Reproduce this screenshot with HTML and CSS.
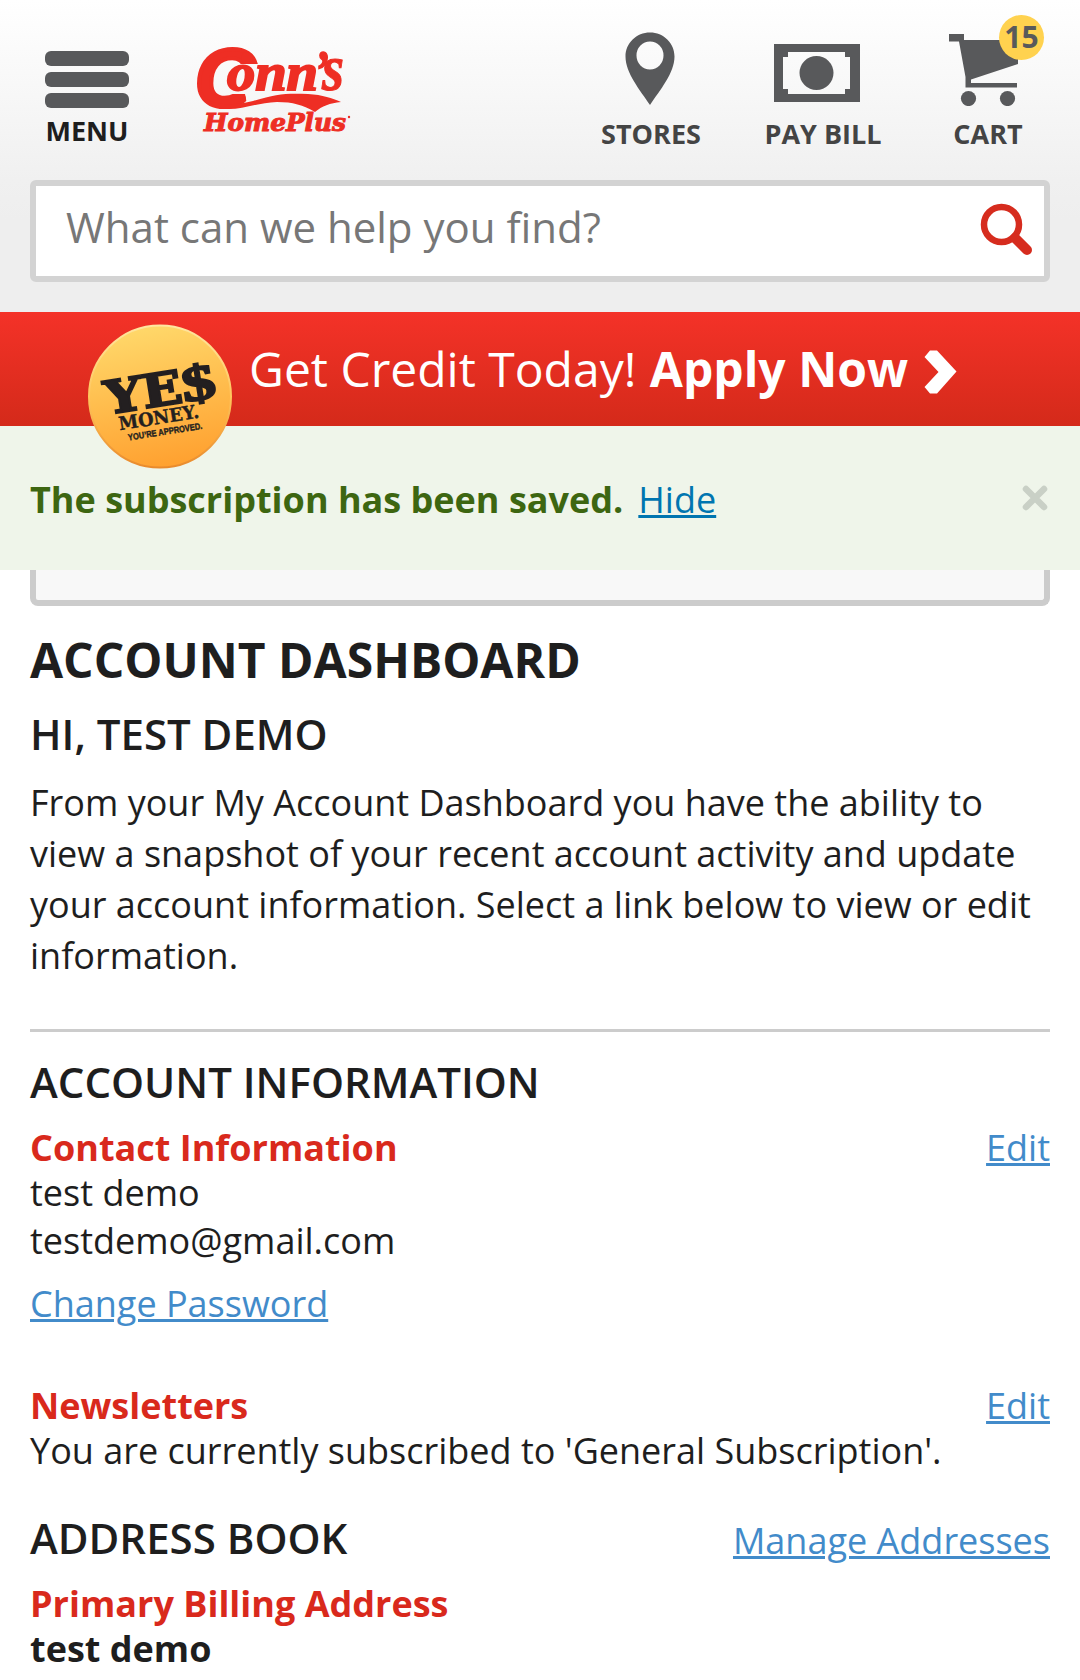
FILE: index.html
```html
<!DOCTYPE html>
<html lang="en">
<head>
<meta charset="utf-8">
<title>Account Dashboard</title>
<link rel="stylesheet" href="styles.css">
</head>
<body>
<header class="header">
  <div class="topbar">
    <a class="menu">
      <span class="bar"></span><span class="bar"></span><span class="bar"></span>
      <span class="menu-label">MENU</span>
    </a>
    <svg class="logo" viewBox="0 0 160 90" width="160" height="90">
      <clipPath id="c-clip"><path d="M-5-5H70V20H26V50H50L54 70H-5Z"/></clipPath>
      <g fill="#ee2e24" stroke="#ee2e24" font-weight="bold">
        <g clip-path="url(#c-clip)"><text x="0" y="62" font-family="Liberation Sans, sans-serif" font-size="81" font-style="italic" textLength="60" lengthAdjust="spacingAndGlyphs" stroke-width="4">C</text></g>
        <circle cx="52" cy="14" r="6" stroke="none"/>
        <g font-family="Liberation Serif, serif" font-style="italic">
          <text x="32" y="46" font-size="53" textLength="91" lengthAdjust="spacingAndGlyphs" stroke-width="2">onn</text>
          <text x="119" y="44" font-size="54" textLength="15" lengthAdjust="spacingAndGlyphs" stroke-width="1.500">’</text>
          <text x="127" y="46" font-size="66" textLength="22" lengthAdjust="spacingAndGlyphs" stroke-width="1">s</text>
        </g>
        <path stroke="none" d="M14 56C24 62 43 61 58 57C81 50 91 49 113 50C128 51 137 54 146 58C135 59 127 62 120 68C108 61 98 58 82 58C61 59 46 66 31 65C23 65 17 62 14 56Z"/>
        <text x="9" y="86.500" font-family="DejaVu Serif, serif" font-style="italic" font-size="24" textLength="142" lengthAdjust="spacingAndGlyphs" stroke-width="1">HomePlus</text>
      </g>
      <circle cx="154" cy="73" r="1.200" fill="#ee2e24"/>
    </svg>
    <nav class="tools">
      <a class="tool stores">
        <svg width="50" height="74" viewBox="0 0 50 74"><path fill="#58595b" fill-rule="evenodd" d="M25 .500C11.500.500.500 11 .500 24.500C.500 41 15 58 25 73C35 58 49.500 41 49.500 24.500C49.500 11 38.500.500 25 .500ZM25 9.500A13.500 14 0 1 1 25 37.500A13.500 14 0 1 1 25 9.500Z"/></svg>
        <span>STORES</span>
      </a>
      <a class="tool bill">
        <svg width="86" height="58" viewBox="0 0 86 58"><path fill="#58595b" fill-rule="evenodd" d="M0 0H86V58H0ZM14 8V13H9V45H14V50H71V45H76V13H71V8Z"/><circle cx="42.500" cy="29" r="17" fill="#58595b"/></svg>
        <span>PAY BILL</span>
      </a>
      <a class="tool cart">
        <svg width="70" height="74" viewBox="0 0 70 74"><path fill="#58595b" d="M0 2H15V8H69V32L22 47.500V51H68V55.500H16.500V45L10 9.500H0Z"/><circle cx="19.500" cy="66.500" r="7.600" fill="#58595b"/><circle cx="58.500" cy="66.500" r="7.600" fill="#58595b"/></svg>
        <span>CART</span>
        <b class="badge">15</b>
      </a>
    </nav>
  </div>
  <div class="search">
    <span>What can we help you find?</span>
    <svg width="54" height="54" viewBox="0 0 54 54"><circle cx="21.500" cy="21.500" r="17.500" fill="none" stroke="#d62c1e" stroke-width="6.500"/><path d="M35 35L47 47" stroke="#d62c1e" stroke-width="10" stroke-linecap="round"/></svg>
  </div>
</header>
<div class="banner">
  <svg class="coin" width="144" height="146" viewBox="0 0 144 146">
    <defs>
      <linearGradient id="gold" x1="0.400" y1="0" x2="0.600" y2="1"><stop offset="0" stop-color="#ffd86a"/><stop offset="1" stop-color="#ffa02f"/></linearGradient>
      <linearGradient id="rim" x1="0" y1="0" x2="0" y2="1"><stop offset="0" stop-color="#ffe6a0"/><stop offset="0.500" stop-color="#ffc65c"/><stop offset="1" stop-color="#e98a2c"/></linearGradient>
    </defs>
    <circle cx="72" cy="72.500" r="71" fill="url(#gold)" stroke="url(#rim)" stroke-width="2"/>
    <g fill="#231f20" stroke="#231f20" font-weight="bold" transform="rotate(-9 72 72)">
      <text x="17" y="82" font-family="DejaVu Serif, serif" font-size="46" textLength="78" lengthAdjust="spacingAndGlyphs" stroke-width="2">YE</text>
      <text x="95" y="82" font-family="Liberation Serif, serif" font-size="50" textLength="34" lengthAdjust="spacingAndGlyphs" stroke-width="2">$</text>
      <text x="27" y="99.500" font-family="DejaVu Serif, serif" font-size="18.500" textLength="81" lengthAdjust="spacingAndGlyphs" stroke-width=".4">MONEY.</text>
      <text x="34" y="111" font-family="Liberation Sans, sans-serif" font-size="9" textLength="75" lengthAdjust="spacingAndGlyphs" stroke-width=".4">YOU’RE APPROVED.</text>
    </g>
  </svg>
  <span class="offer">Get Credit Today! <b>Apply Now</b></span>
  <svg class="chevron" width="33" height="44" viewBox="0 0 33 44"><path fill="#fff" d="M6 .500H13L32.500 21.500L13 43.500H6L.500 37L14.500 22L.500 7Z"/></svg>
</div>
<div class="notice">
  <b>The subscription has been saved.</b>
  <a class="hide">Hide</a>
  <svg class="close" width="26" height="26" viewBox="0 0 26 26"><path d="M4 4L22 22M22 4L4 22" stroke="#c9d0c6" stroke-width="6.500" stroke-linecap="round"/></svg>
</div>
<main class="main">
  <div class="panel"></div>
  <h1>ACCOUNT DASHBOARD</h1>
  <h2 class="hello">HI, TEST DEMO</h2>
  <p class="intro">From your My Account Dashboard you have the ability to view a snapshot of your recent account activity and update your account information. Select a link below to view or edit information.</p>
  <h2 class="section">ACCOUNT INFORMATION</h2>
  <div class="row"><h3>Contact Information</h3><a>Edit</a></div>
  <p>test demo<br>testdemo@gmail.com</p>
  <p class="password"><a>Change Password</a></p>
  <div class="row newsletters"><h3>Newsletters</h3><a>Edit</a></div>
  <p>You are currently subscribed to 'General Subscription'.</p>
  <div class="row address"><h2>ADDRESS BOOK</h2><a>Manage Addresses</a></div>
  <div class="row billing"><h3>Primary Billing Address</h3></div>
  <p><b>test demo</b></p>
</main>
</body>
</html>
```
FILE: styles.css
```css
* { box-sizing: border-box; }
body {
  margin: 0;
  height: 1680px;
  overflow: hidden;
  background: #fff;
  color: #1e1e1e;
  font: 36px/48px "Open Sans", sans-serif;
}
h1, h2, h3, p { margin: 0; }
.header {
  height: 312px;
  padding: 0 30px;
  background: linear-gradient(#fff 0, #f0f0f0 180px, #eee 220px);
}
.topbar { height: 180px; display: flex; align-items: flex-start; }
.menu {
  width: 84px;
  margin: 51px 0 0 15px;
  display: flex;
  flex-direction: column;
  gap: 6px;
}
.bar { height: 15px; border-radius: 6px; background: #58595b; }
.menu-label {
  margin-top: -1px;
  text-align: center;
  font-size: 27px;
  font-weight: 700;
  line-height: 36px;
}
.logo { margin: 44px 0 0 66px; overflow: visible; }
.tools { display: flex; margin-left: auto; color: #444; }
.tool {
  position: relative;
  display: flex;
  flex-direction: column;
  align-items: center;
  height: 152px;
  font-size: 27px;
  font-weight: 700;
  line-height: 36px;
  white-space: nowrap;
}
.tool span { margin-top: auto; }
.stores { width: 102px; padding-top: 32px; margin-right: 61px; }
.stores svg { margin-right: 2px; }
.bill { width: 120px; padding-top: 44px; margin-right: 62px; }
.bill svg { margin-right: 12px; }
.cart { width: 86px; padding-top: 32px; margin-right: 19px; }
.cart svg { margin-right: 8px; }
.badge {
  position: absolute;
  left: 54px;
  top: 15px;
  width: 45px;
  height: 45px;
  border-radius: 50%;
  background: #ffd24f;
  color: #58595b;
  font-size: 30px;
  font-weight: 700;
  line-height: 43px;
  text-align: center;
}
.search {
  height: 102px;
  border: 6px solid #d3d3d3;
  border-radius: 6px;
  background: #fff;
  padding: 0 10px 8px 30px;
  display: flex;
  align-items: center;
  justify-content: space-between;
  color: #777;
  font-size: 42px;
}
.search svg { margin-top: 6px; }
.banner {
  position: relative;
  height: 114px;
  padding-left: 249px;
  display: flex;
  align-items: center;
  background: linear-gradient(#f43228, #d42a1a);
  color: #fff;
  font-size: 48px;
}
.offer b { margin-left: 1px; }
.coin { position: absolute; left: 88px; top: 12px; }
.chevron { margin: 5px 0 0 16px; }
.notice {
  height: 144px;
  padding: 4px 32px 0 30px;
  display: flex;
  align-items: center;
  background: #eff5ea;
}
.notice b { color: #3d6611; }
.hide { margin-left: 15px; color: #0075b0; text-decoration: underline 3px; }
.close { margin: -4px 0 0 auto; }
.main { padding: 0 30px; }
.panel {
  height: 36px;
  border: 6px solid #ccc;
  border-top: 0;
  border-radius: 0 0 8px 8px;
  background: #f8f8f8;
}
h1 { margin-top: 24px; font-size: 48px; font-weight: 700; line-height: 60px; }
h2 { font-size: 42px; font-weight: 600; line-height: 50px; }
h3 { font-size: 36px; font-weight: 700; line-height: 45px; color: #d9291c; }
.hello { margin-top: 19px; }
.intro { margin-top: 18px; line-height: 51px; padding-bottom: 48px; border-bottom: 3px solid #ccc; }
.section { margin: 25px 0 18px; }
.main a { color: #428bca; text-decoration: underline 3px; }
.row { display: flex; justify-content: space-between; align-items: baseline; height: 44px; line-height: 45px; }
.password { margin-top: 15px; }
.newsletters { margin-top: 55px; }
.address { height: 50px; margin-top: 38px; line-height: 50px; }
.billing { margin-top: 18px; }
```
